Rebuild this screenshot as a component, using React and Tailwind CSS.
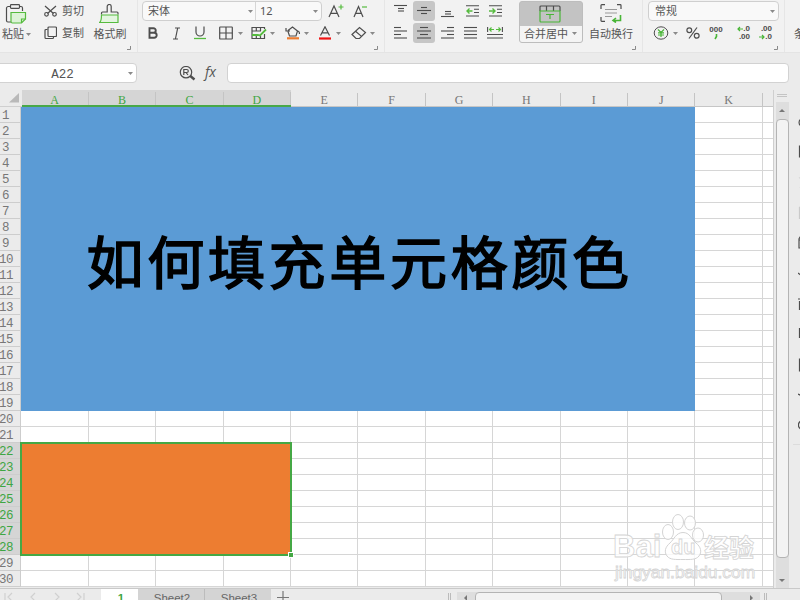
import clsx from "clsx";

const COLUMNS = ["A", "B", "C", "D", "E", "F", "G", "H", "I", "J", "K"];
const ROWS = Array.from({ length: 30 }, (_, i) => i + 1);

const Icon = ({ w, h, children, className }) => (
  <svg
    width={w}
    height={h}
    viewBox={`0 0 ${w} ${h}`}
    fill="none"
    stroke="#4d4d4d"
    strokeWidth="1.2"
    className={clsx("shrink-0", className)}
  >
    {children}
  </svg>
);

const Caret = ({ className }) => (
  <Icon w={5} h={3} className={className}>
    <path d="M0 0h5L2.5 3z" fill="#8a8a8a" stroke="none" />
  </Icon>
);

const Slot = ({ className, children }) => (
  <div className={clsx("flex h-full shrink-0 items-center justify-center", className)}>
    {children}
  </div>
);

// small corner mark that opens a group's dialog
const Corner = () => (
  <Icon w={4} h={4} className="absolute right-[6px] bottom-[2px]">
    <path d="M3.5 0v3.5H0" stroke="#8a8a8a" strokeWidth="1" />
  </Icon>
);

const Lines = ({ rows }) => (
  <Icon w={14} h={14}>
    {rows.map(([x1, x2, y]) => (
      <path key={y} d={`M${x1} ${y}H${x2}`} strokeWidth="1.1" />
    ))}
  </Icon>
);

function ClipboardGroup() {
  return (
    <div className="relative flex h-full w-[138px] shrink-0 border-r border-[#e6e6e6]">
      <div className="flex w-[34px] flex-col items-center">
        <Icon w={22} h={20} className="mt-[4px] mr-[2px]">
          <path d="M5.500 2.500H3A2 2 0 0 0 1.500 4v12.500A1.500 1.500 0 0 0 3 18h3M14.500 2.500H16a1.500 1.500 0 0 1 1.500 1.500v3" />
          <rect x="5.500" y=".7" width="9" height="3.600" rx=".8" />
          <path d="M6 8.500h14.500V15l-4 4H7.500A1.500 1.500 0 0 1 6 17.500z" fill="#dcf3d6" stroke="#55bb3e" />
          <path d="M16.500 19v-4h4" stroke="#55bb3e" />
        </Icon>
        <div className="mt-[2px] flex h-[16px] items-center gap-[2px] self-start pl-[2px]">
          <span>粘贴</span>
          <Caret />
        </div>
      </div>
      <div className="flex w-[53px] flex-col pl-[10px]">
        <div className="flex h-[22px] items-center gap-[5px]">
          <Icon w={13} h={12}>
            <path d="M1 1l8.500 7.500M12 1L3.500 8.500" />
            <circle cx="2.500" cy="9.300" r="1.800" />
            <circle cx="10.500" cy="9.300" r="1.800" />
          </Icon>
          <span>剪切</span>
        </div>
        <div className="flex h-[22px] items-center gap-[5px]">
          <Icon w={13} h={14}>
            <rect x="4" y="1" width="8.500" height="9.500" rx="1" />
            <path d="M3.500 3.500H2a1 1 0 0 0-1 1v7a1 1 0 0 0 1 1h6.500a1 1 0 0 0 1-1v-1" />
          </Icon>
          <span>复制</span>
        </div>
      </div>
      <div className="flex w-[46px] flex-col items-center">
        <Icon w={22} h={20} className="mt-[4px]">
          <path d="M2.500 10.500V9a1 1 0 0 1 1-1h4.700V2.500a2 2 0 0 1 4 0V8H18a1 1 0 0 1 1 1v1.500" />
          <path d="M2.500 11H19v7.500H0.500c1.500-1 2-3 2-7.500z" fill="#e3f5df" stroke="#55bb3e" />
        </Icon>
        <span className="mt-[2px] leading-[16px]">格式刷</span>
      </div>
      <Corner />
    </div>
  );
}

function FontGroup() {
  return (
    <div className="relative h-full w-[247px] shrink-0 border-r border-[#e6e6e6] pl-[4px]">
      <div className="flex h-[22px] items-center">
        <div className="flex h-[20px] w-[180px] shrink-0 rounded-[4px] border border-[#cfcfcf] bg-[#f9f9f9]">
          <div className="flex w-[113px] items-center justify-between border-r border-[#d6d6d6] pr-[2px] pl-[5px]">
            <span>宋体</span>
            <Caret />
          </div>
          <div className="flex flex-1 items-center justify-between pr-[3px] pl-[4px]">
            <span className="text-[11px]">12</span>
            <Caret />
          </div>
        </div>
        <Slot className="ml-[6px] w-[16px]">
          <Icon w={16} h={14}>
            <path d="M1 13L6 2l5 11M2.900 9.300h6.300" />
            <path d="M10.500 3h5M13 .5v5" stroke="#55bb3e" />
          </Icon>
        </Slot>
        <Slot className="ml-[9px] w-[16px]">
          <Icon w={16} h={14}>
            <path d="M1 13L5.500 2.500l4.500 10.500M2.800 9.300h5.500" />
            <path d="M9 3h5" stroke="#55bb3e" />
          </Icon>
        </Slot>
      </div>
      <div className="flex h-[22px] items-center">
        <Slot className="w-[22px]">
          <Icon w={10} h={12}>
            <path d="M1.500 1.200h4a2.200 2.200 0 0 1 0 4.500h-4zM1.500 5.700h4.700a2.500 2.500 0 0 1 0 5H1.500z" strokeWidth="1.900" />
          </Icon>
        </Slot>
        <Slot className="w-[25px]">
          <Icon w={9} h={13}>
            <path d="M3 1h5M1 12h5M5.700 1L3.400 12" />
          </Icon>
        </Slot>
        <Slot className="w-[23px]">
          <Icon w={12} h={14} className="-ml-[2px]">
            <path d="M2 .5v5.500a4 4 0 0 0 8 0V.5" />
            <path d="M0 12.500h12" stroke="#55bb3e" strokeWidth="1.300" />
          </Icon>
        </Slot>
        <Slot className="ml-[7px] w-[14px]">
          <Icon w={14} h={14}>
            <rect x=".7" y="1" width="12.600" height="12" rx=".5" />
            <path d="M7 1v12M.7 7h12.600" />
          </Icon>
        </Slot>
        <Caret className="ml-[5px]" />
        <Slot className="ml-[8px] w-[16px]">
          <Icon w={16} h={14}>
            <path d="M13.500 3V1.500H1V12.500h12.500V8M1 5h9M5.300 1.500v3.500M9.500 1.500V5M5.300 10v2.500M9.500 10v2.500" />
            <path d="M1 9h6l2 .5L15 3.500" stroke="#55bb3e" strokeWidth="1.800" />
          </Icon>
        </Slot>
        <Caret className="ml-[3px]" />
        <Slot className="ml-[10px] w-[16px]">
          <Icon w={16} h={14}>
            <path d="M3 4.500L7.500 1l5 4-1.500 5H4.500L3 5.500M1 2v3h4M12.500 5c1.500 0 2 1 2 3" />
            <path d="M2 12.300h12" stroke="#ed7d31" strokeWidth="2.200" />
          </Icon>
        </Slot>
        <Caret className="ml-[3px]" />
        <Slot className="ml-[9px] w-[14px]">
          <Icon w={14} h={14}>
            <path d="M2.500 9.500L7 0.800l4.500 8.700M4 6.800h6" />
            <path d="M1 12.500h12" stroke="#f01414" strokeWidth="2.200" />
          </Icon>
        </Slot>
        <Caret className="ml-[4px]" />
        <Slot className="ml-[10px] w-[16px]">
          <Icon w={16} h={14}>
            <path d="M1 8.500L8.500 1.500l6 5-6 6H5zM4.500 5.200l6 5.200" />
          </Icon>
        </Slot>
        <Caret className="ml-[3px]" />
      </div>
      <Corner />
    </div>
  );
}

function AlignGroup() {
  return (
    <div className="relative flex h-full w-[258px] shrink-0 border-r border-[#e6e6e6]">
      <div className="w-[134px] shrink-0 pl-[5px]">
        <div className="flex h-[22px] items-center">
          <Slot className="w-[22px]">
            <Lines rows={[[0, 13, 1.5], [4, 10, 4.5], [4, 10, 7]]} />
          </Slot>
          <div className="ml-px flex h-[20px] w-[22px] items-center justify-center rounded-[3px] bg-[#c6c6c6]">
            <Lines rows={[[4, 10, 3.5], [0, 14, 6.5], [4, 10, 9.5]]} />
          </div>
          <Slot className="ml-px w-[24px]">
            <Lines rows={[[4, 10, 7.5], [4, 10, 10], [0, 13, 12.5]]} />
          </Slot>
          <Slot className="ml-[3px] w-[20px]">
            <Icon w={14} h={12}>
              <path d="M0 .7h13M8 4.200h5M8 7.500h5M0 11h13" strokeWidth="1.100" />
              <path d="M6.500 6H1M3.500 3.500L1 6l2.500 2.500" stroke="#55bb3e" strokeWidth="1.400" />
            </Icon>
          </Slot>
          <Slot className="ml-[3px] w-[20px]">
            <Icon w={14} h={12}>
              <path d="M0 .7h13M8 4.200h5M8 7.500h5M0 11h13" strokeWidth="1.100" />
              <path d="M0 6h5.500M3.500 3.500L6 6 3.500 8.500" stroke="#55bb3e" strokeWidth="1.400" />
            </Icon>
          </Slot>
        </div>
        <div className="flex h-[22px] items-center">
          <Slot className="w-[22px]">
            <Lines rows={[[0, 7, 1.5], [0, 13, 5], [0, 7, 8.5], [0, 13, 12]]} />
          </Slot>
          <div className="ml-px flex h-[20px] w-[22px] items-center justify-center rounded-[3px] bg-[#c6c6c6]">
            <Lines rows={[[3, 11, 1.5], [0, 14, 5], [3, 11, 8.5], [0, 14, 12]]} />
          </div>
          <Slot className="ml-px w-[24px]">
            <Lines rows={[[6, 13, 1.5], [0, 13, 5], [6, 13, 8.5], [0, 13, 12]]} />
          </Slot>
          <Slot className="w-[22px]">
            <Lines rows={[[0, 13, 1.5], [0, 13, 5], [0, 13, 8.5], [0, 13, 12]]} />
          </Slot>
          <Slot className="w-[26px]">
            <Icon w={16} h={14}>
              <path d="M.6 1v5M15.400 1v5M0 8.500h16M0 12h16" strokeWidth="1.100" />
              <path d="M7 3.500H2.500M4.500 1.500l-2 2 2 2M9 3.500h4.500M11.500 1.500l2 2-2 2" stroke="#55bb3e" />
            </Icon>
          </Slot>
        </div>
      </div>
      <div className="mt-px flex h-[42px] w-[64px] shrink-0 flex-col overflow-hidden rounded-[3px] border border-[#bdbdbd] bg-[#c3c3c3]">
        <div className="flex h-[24px] items-center justify-center pr-[2px]">
          <Icon w={22} h={18}>
            <path d="M1 6V2a1 1 0 0 1 1-1h18a1 1 0 0 1 1 1v4M7.500 1v5M14.500 1v5" />
            <path d="M1 6h20v10a1 1 0 0 1-1 1H2a1 1 0 0 1-1-1zM7 9.500h8M11 9.500V14" stroke="#48b536" />
          </Icon>
        </div>
        <div className="flex flex-1 items-center gap-[4px] bg-[#f4f4f4] pl-[4px]">
          <span>合并居中</span>
          <Caret />
        </div>
      </div>
      <div className="flex w-[54px] shrink-0 flex-col items-center">
        <Icon w={22} h={19} className="mt-[4px] ml-[2px]">
          <path d="M1 5V1.500A.8.800 0 0 1 1.800.700H5M17 .700h3.200a.8.800 0 0 1 .8.800V5M1 13v3.500a.8.800 0 0 0 .8.800H5" />
          <path d="M5 5.500h12M5 9h12M5 12.500h7" stroke="#999" />
          <path d="M20.500 11v5.500h-7M16 14l-3 2.500 3 2" stroke="#48b536" strokeWidth="1.600" />
        </Icon>
        <span className="mt-[3px] ml-[2px] leading-[16px] whitespace-nowrap">自动换行</span>
      </div>
      <Corner />
    </div>
  );
}

function NumberGroup() {
  return (
    <div className="relative h-full w-[142px] shrink-0 border-r border-[#e6e6e6] pl-[5px]">
      <div className="flex h-[22px] items-center">
        <div className="flex h-[20px] w-[131px] items-center justify-between rounded-[4px] border border-[#cfcfcf] bg-[#f9f9f9] pr-[3px] pl-[6px]">
          <span>常规</span>
          <Caret />
        </div>
      </div>
      <div className="flex h-[22px] items-center font-['Liberation_Sans'] text-[8px] leading-[8px] font-bold text-[#4d4d4d]">
        <Slot className="ml-[5px] w-[16px]">
          <Icon w={16} h={14}>
            <ellipse cx="8" cy="7" rx="6.800" ry="6.200" strokeWidth="1" />
            <path d="M5 3.500l3 3 3-3M8 6.500V11M5 6.800h6M5 9h6" stroke="#48b536" />
          </Icon>
        </Slot>
        <Caret className="ml-[4px]" />
        <Slot className="ml-[7px] w-[15px]">
          <Icon w={14} h={12}>
            <circle cx="3.300" cy="3.200" r="2.400" />
            <circle cx="10.700" cy="8.800" r="2.400" />
            <path d="M11 .5L3 11.500" />
          </Icon>
        </Slot>
        <div className="ml-[9px] flex w-[14px] flex-col items-center">
          <span>000</span>
          <Icon w={4} h={6}>
            <path d="M2.500 0v2.500L1 5" stroke="#48b536" strokeWidth="1.600" />
          </Icon>
        </div>
        <div className="ml-[13px] flex w-[14px] flex-col items-end">
          <span className="flex items-center">
            <Icon w={6} h={6}>
              <path d="M6 3H1M3 1L1 3l2 2" stroke="#48b536" />
            </Icon>
            .0
          </span>
          <span>.00</span>
        </div>
        <div className="ml-[8px] flex w-[14px] flex-col items-end">
          <span>.00</span>
          <span className="flex items-center">
            <Icon w={6} h={6}>
              <path d="M0 3h5M3 1l2 2-2 2" stroke="#48b536" />
            </Icon>
            .0
          </span>
        </div>
      </div>
      <Corner />
    </div>
  );
}

function FormulaBar() {
  return (
    <div className="flex h-[37px] items-start pt-[10px]">
      <div className="-ml-[4px] flex h-[20px] w-[141px] shrink-0 items-center rounded-[4px] border border-[#d2d2d2] bg-white pr-[3px]">
        <span className="flex-1 pt-[3px] text-center font-['Liberation_Mono'] text-[12.5px] leading-[16px] text-[#555]">
          A22
        </span>
        <Caret />
      </div>
      <Icon w={17} h={15} className="mt-[3px] ml-[42px]">
        <circle cx="7" cy="6.200" r="5.700" />
        <path d="M11 9.800l4.500 3.700" strokeWidth="2.400" />
        <path d="M4.800 9V3.500h3a1.500 1.500 0 0 1 0 3H5M7 6.500L9 9" />
      </Icon>
      <span className="ml-[9px] w-[22px] shrink-0 font-['Open_Sans'] text-[14px] leading-[18px] font-medium text-[#555] italic">
        fx
      </span>
      <div className="h-[20px] w-[562px] shrink-0 rounded-[4px] border border-[#d2d2d2] bg-white" />
    </div>
  );
}

function Sheet() {
  return (
    <div className="h-[498px] w-[774px] shrink-0 overflow-hidden border-r border-[#cfcfcf]">
      {/* Column letters */}
      <div className="flex h-[16.5px]">
        <div className="flex w-[21.5px] shrink-0 items-end justify-end border-b border-[#cfcfcf] pr-[3px] pb-[3px]">
          <Icon w={10} h={10}>
            <path d="M10 0v9.500H0z" fill="#b9b9b9" stroke="none" />
          </Icon>
        </div>
        {COLUMNS.map((name, i) => (
          <div
            key={name}
            className={clsx(
              "flex w-[67.4px] shrink-0 items-end justify-center font-['Liberation_Serif'] text-[12px] leading-[12px]",
              i < 4
                ? "border-b-2 border-[#48a848] bg-[#d5d5d5] text-[#3fa643]"
                : "border-b border-[#c6c6c6] text-[#777]"
            )}
          >
            <span className={clsx("flex-1 text-center", i < 4 ? "-mb-px" : "")}>{name}</span>
            <span className="h-[13px] w-px bg-[#c4c4c4]" />
          </div>
        ))}
        <div className="flex-1 border-b border-[#c6c6c6]" />
      </div>
      <div className="flex">
        {/* Row numbers */}
        <div className="w-[21px] shrink-0 overflow-hidden">
          {ROWS.map((n) => (
            <div
              key={n}
              className={clsx(
                "h-[16.04px] border-r border-b border-[#cdcdcd] font-['Liberation_Mono'] text-[12.5px] leading-[19px] tracking-[-0.5px]",
                n >= 22 && n <= 28 ? "bg-[#d5d5d5] text-[#3fa643]" : "text-[#777]",
                n < 10 ? "pl-[2px]" : "-indent-px"
              )}
            >
              {n}
            </div>
          ))}
        </div>
        {/* Cells */}
        <div className="grid grid-cols-[67.8px_repeat(10,67.4px)_11px] grid-rows-[repeat(30,16.04px)] bg-white">
          <div className="col-start-1 col-span-10 row-start-1 row-span-19 flex justify-center bg-[#5b9bd5]">
            <span className="mt-[107px] ml-[3px] font-['Noto_Sans_CJK_SC',sans-serif] text-[57px] leading-[90px] font-normal tracking-[3.7px] whitespace-nowrap text-black [-webkit-text-stroke:1.6px_#000]">
              如何填充单元格颜色
            </span>
          </div>
          <div className="relative col-start-1 col-span-4 row-start-22 row-span-7 bg-[#ed7d31]">
            <div className="absolute -top-px -right-px -bottom-px -left-px border-2 border-[#45a845]" />
            <div className="absolute -right-[3px] -bottom-[3px] size-[6px] border border-white bg-[#45a845]" />
          </div>
          {Array.from({ length: 142 }, (_, i) => (
            <div key={i} className="border-r border-b border-[#d6d6d6]" />
          ))}
        </div>
      </div>
    </div>
  );
}

function VerticalScroll() {
  return (
    <div className="flex h-full w-[16px] shrink-0 flex-col items-center pt-[4px]">
      <div className="h-[3px] w-[10px] border-y border-[#c4c4c4]" />
      <div className="mt-[5px] flex w-[13px] flex-1 flex-col items-center bg-[#dedede]">
        <Icon w={6} h={3} className="mt-[7px] mb-[7px]">
          <path d="M0 3h6L3 0z" fill="#777" stroke="none" />
        </Icon>
        <div className="h-[439px] w-[13px] rounded-[4px] border border-[#b4b4b4] bg-[#f3f3f3]" />
        <Icon w={6} h={3} className="mt-[21px]">
          <path d="M0 0h6L3 3z" fill="#777" stroke="none" />
        </Icon>
      </div>
    </div>
  );
}

// task pane shortcuts, cut off at the window's right edge
const PANE_ICONS = [
  "M7 4a4 4 0 1 0 0 7",
  "M10 1H1.500v11H10M1.500 5H10M1.500 8.500H10",
  "M10 2H2l5 5-5 5",
  "M1.500 1v12M1.500 1H9",
  "M10 1H2L1 3v9h9M1 4h8",
  "M0 6l4 3",
  "M0 2h9M1.500 4v9",
  "M10 1.500H1.500v9H10",
  "M10 1H1.500v12H10M1.500 10H10",
  "M0 6l4 2",
  "M7 3a4.500 4.500 0 1 0 0 8",
];

function TaskPane() {
  return (
    <div className="flex w-[10px] shrink-0 flex-col overflow-hidden pt-[17px]">
      {PANE_ICONS.map((d, i) => (
        <div key={i} className="flex h-[30.3px] shrink-0 items-center pl-[7.5px]">
          <Icon w={10} h={14} className={i === 2 || i === 3 ? "opacity-20" : ""}>
            <path d={d} />
          </Icon>
        </div>
      ))}
      <div className="mt-[4px] ml-[3px] h-px shrink-0 bg-[#dcdcdc]" />
    </div>
  );
}

function SheetTabs() {
  return (
    <div className="flex h-[12px] overflow-hidden border-t border-[#c9c9c9] font-['Liberation_Sans'] text-[11.5px] text-[#666]">
      <Icon w={101} h={18} className="mt-px">
        <path
          d="M5 3v8M12 3L8 7l4 4M35 3l-4 4 4 4M55 3l4 4-4 4M77 3l4 4-4 4M84 3v8"
          stroke="#d0d0d0"
        />
      </Icon>
      <div className="h-[20px] w-[37px] shrink-0 bg-white pt-[3px] pl-[3px] text-center leading-[12px] font-bold text-[#3fa643]">
        1
      </div>
      <div className="h-[20px] w-[67px] shrink-0 border-r border-[#bcbcbc] bg-[#d4d4d4] pt-[3px] pl-[2px] text-center leading-[12px]">
        Sheet2
      </div>
      <div className="h-[20px] w-[66px] shrink-0 bg-[#d4d4d4] pt-[3px] pl-[2px] text-center leading-[12px]">
        Sheet3
      </div>
      <Icon w={12} h={14} className="mt-[2px] ml-[6px]">
        <path d="M6 0v12M0 6.500h12" stroke="#777" />
      </Icon>
      <div className="mt-[4px] ml-[159px] h-[12px] w-[3px] shrink-0 border-x border-[#bbb]" />
      <div className="mt-[3px] ml-[6px] flex h-[14px] w-[303px] shrink-0 bg-[#dedede]">
        <Icon w={18} h={12}>
          <path d="M10 3v6L7 6z" fill="#777" stroke="none" />
        </Icon>
        <div className="h-[14px] w-[247px] shrink-0 rounded-[4px] border border-[#b4b4b4] bg-[#f3f3f3]" />
        <Icon w={38} h={12}>
          <path d="M28 3v6l3-3z" fill="#777" stroke="none" />
        </Icon>
      </div>
      <div className="mt-[4px] ml-[4px] h-[12px] w-[3px] shrink-0 border-x border-[#bbb]" />
    </div>
  );
}

function Watermark() {
  return (
    <div className="pointer-events-none absolute top-[512px] left-[612px] w-[148px] text-white/80 [-webkit-text-stroke:0.8px_#d4d4d4]">
      <div className="flex h-[50px] items-end">
        <span className="w-[50px] shrink-0 pb-[3px] pl-px font-['Liberation_Sans'] text-[31px] leading-[25px] font-bold">
          Bai
        </span>
        <div className="relative h-[50px] w-[42px] shrink-0">
          <svg width="42" height="50" viewBox="0 0 42 50" fill="#fff" fillOpacity=".8" stroke="#d4d4d4">
            <ellipse cx="6" cy="20" rx="5.500" ry="7.500" />
            <ellipse cx="16" cy="10" rx="5.500" ry="7.500" />
            <ellipse cx="28" cy="11" rx="5.500" ry="7" />
            <ellipse cx="36" cy="23" rx="5.500" ry="7" />
            <path d="M21 20.500c-7 0-9 7-13 10.500-5 4-6 9-3 13s9 3.500 16 3.500 13 .5 16-3.500 2-9-3-13-6-10.500-13-10.500z" />
          </svg>
          <span className="absolute top-[25px] left-[9px] font-['Liberation_Sans'] text-[20px] leading-[20px] font-bold">
            du
          </span>
        </div>
        <span className="mb-[3px] font-['Noto_Sans_CJK_SC',sans-serif] text-[25px] leading-[26px] font-bold whitespace-nowrap">
          经验
        </span>
      </div>
      <div className="mt-px pl-[3px] font-['Liberation_Sans'] text-[17.4px] leading-[18px] whitespace-nowrap">
        jingyan.baidu.com
      </div>
    </div>
  );
}

export default function App() {
  return (
    <div className="relative h-[600px] w-[800px] overflow-hidden bg-[#ebebeb] font-['Noto_Sans','Noto_Sans_CJK_SC',sans-serif] text-[11px] text-[#555]">
      {/* Ribbon */}
      <div className="flex h-[53px] overflow-hidden border-b border-[#e4e4e4] bg-[#f2f2f2]">
        <ClipboardGroup />
        <FontGroup />
        <AlignGroup />
        <NumberGroup />
        <span className="mt-[26px] ml-[9px] shrink-0 leading-[16px]">条</span>
      </div>
      <FormulaBar />
      <div className="flex h-[498px]">
        <Sheet />
        <VerticalScroll />
        <TaskPane />
      </div>
      <SheetTabs />
      <Watermark />
    </div>
  );
}
